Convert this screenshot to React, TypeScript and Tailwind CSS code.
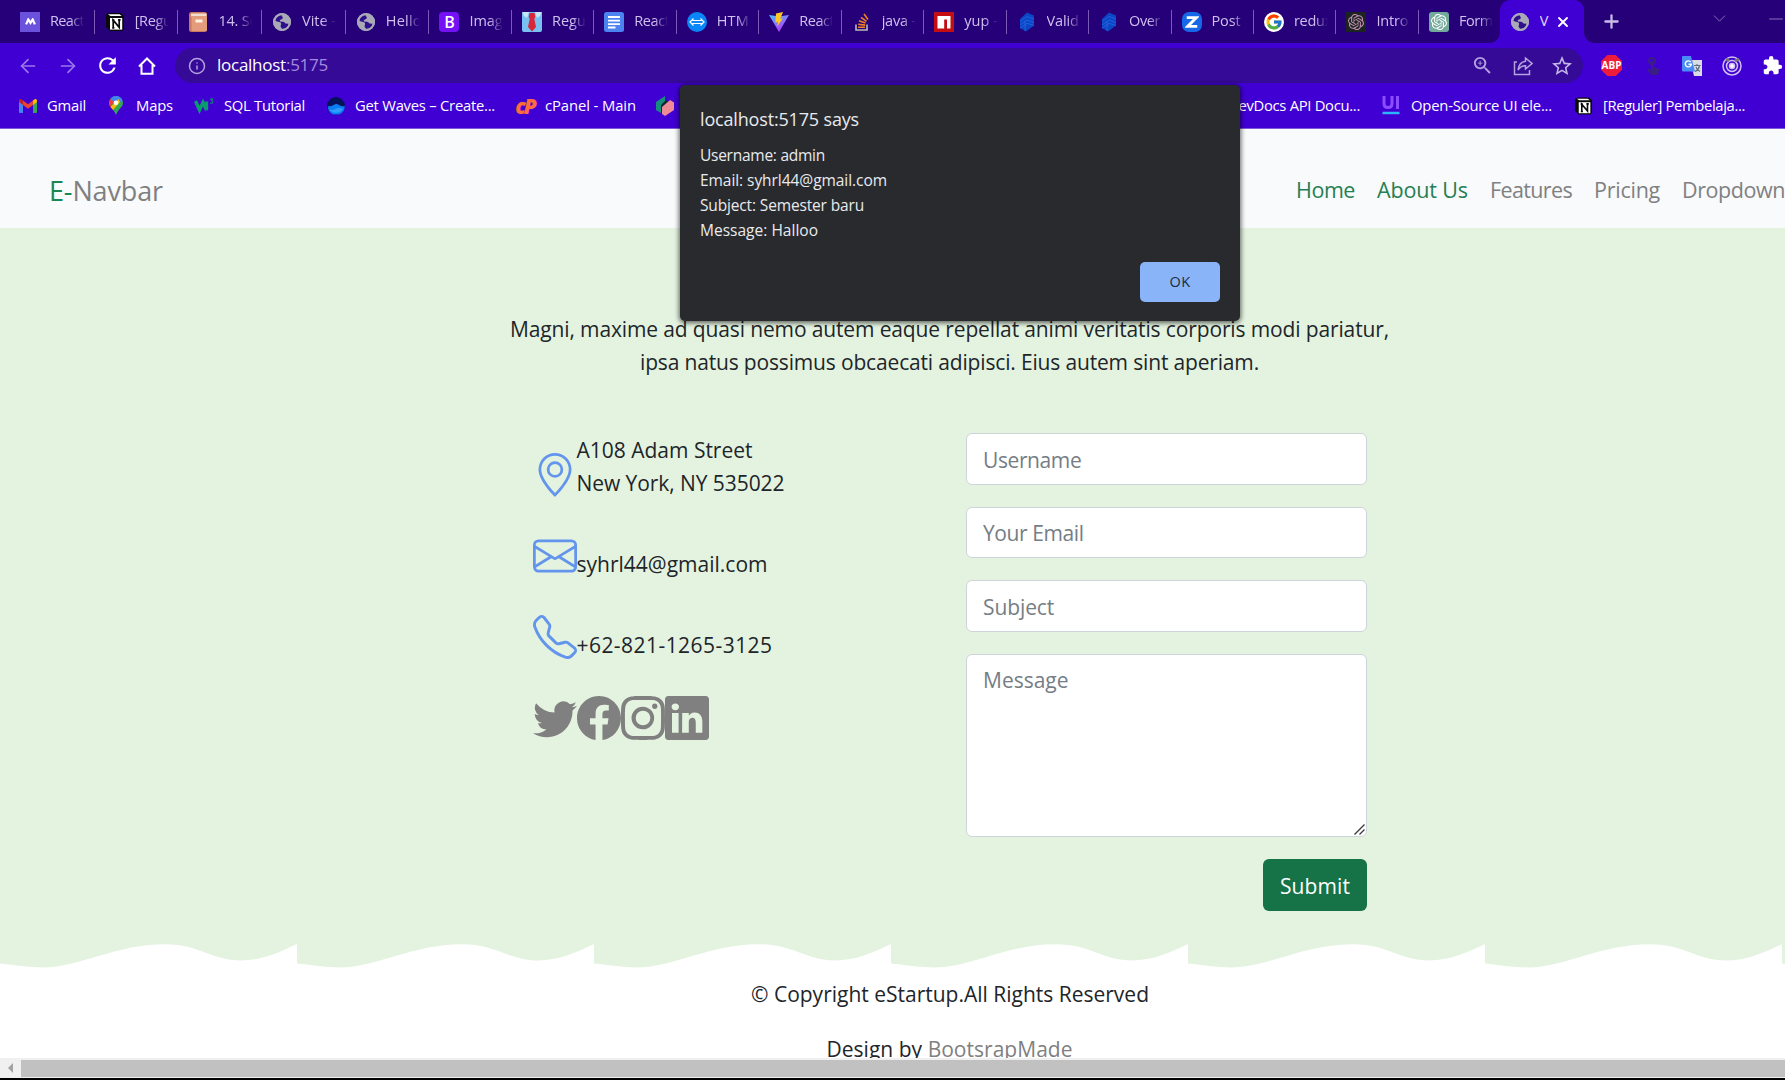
import { useLayoutEffect, useRef } from "react";
import type { ReactNode } from "react";
import {
  BsGeoAlt,
  BsEnvelope,
  BsTelephone,
  BsTwitter,
  BsFacebook,
  BsInstagram,
  BsLinkedin,
} from "react-icons/bs";
import { MdRefresh, MdExtension, MdStarBorder, MdOutlineZoomIn } from "react-icons/md";
import { FcGoogle } from "react-icons/fc";
import { SiOpenai } from "react-icons/si";
import { ArrowLeft, ArrowRight, Info, X, Plus, ChevronDown, Minus } from "lucide-react";

/** Inline text whose letter spacing is tuned so that it fills `w` pixels. */
function Fit({ w, children, className = "" }: { w: number; children: ReactNode; className?: string }) {
  const ref = useRef<HTMLSpanElement>(null);
  useLayoutEffect(() => {
    const el = ref.current;
    if (!el) return;
    el.style.letterSpacing = "0px";
    const n = (el.textContent || "").length;
    el.style.letterSpacing = `${(w - el.getBoundingClientRect().width) / n}px`;
  }, [w]);
  return (
    <span ref={ref} className={`inline-block whitespace-nowrap ${className}`}>
      {children}
    </span>
  );
}

/* ---------- small logos ---------- */

const Globe = () => (
  <svg viewBox="0 0 20 20" className="size-5">
    <circle cx="10" cy="10" r="9" fill="#a9a9b8" />
    <path
      d="M9.500 3.200q-4 .5-5.800 4L3.500 9l3.500 1q2.500.2 2 2.500l-.5 2 1.500 2.300q5.500.2 6.500-5l-3-.3q-1.200-2-3-1.700L8 9.500Q7 8 9 7.500q2-.3 1.800-2z"
      fill="#30108a"
    />
    <circle cx="10" cy="10" r="8.100" fill="none" stroke="#a9a9b8" strokeWidth="1.800" />
  </svg>
);

const Notion = () => (
  <svg viewBox="0 0 20 20" className="size-5">
    <path d="M1 2.500 4 1h12l3 3v13l-2 2H5l-4-4z" fill="#0a0a0a" />
    <path d="M3 2.300h11.500l2.200 1.600H5.400z" fill="#fff" />
    <path d="M5 6h12.200v11.600H5z" fill="#fff" />
    <path d="M8.200 15.800V8.200l6 7.200V7.800M7 8h2.400M13 7.800h2.600M7.200 15.800h2.200" fill="none" stroke="#0a0a0a" strokeWidth="1.700" />
  </svg>
);

const MLogo = () => (
  <div className="flex size-5 items-center justify-center bg-[#6a52dc]">
    <svg viewBox="0 0 12 8" className="w-[11px]">
      <path d="M1.200 7 3.600 1.600 6 5.400 8.400 1.600 10.800 7" fill="none" stroke="#fff" strokeWidth="2.400" />
    </svg>
  </div>
);

const Book = () => (
  <svg viewBox="0 0 20 20" className="size-5">
    <rect x="1" y="0" width="18" height="20" rx="2.500" fill="#c9795c" />
    <path d="M3 1.500h15.500v3H3z" fill="#f3dccd" />
    <rect x="3.500" y="4" width="15.500" height="15" rx="1" fill="#e39b7c" />
    <rect x="7.500" y="7.500" width="7" height="3" fill="#fff0e6" />
  </svg>
);

const BootstrapB = () => (
  <div className="flex size-5 items-center justify-center rounded-[4px] bg-[#7411f5] text-base leading-none font-semibold text-white">B</div>
);

const Tie = () => (
  <svg viewBox="0 0 20 20" className="size-5">
    <rect width="20" height="20" rx="2" fill="#79c0f2" />
    <path d="M0 0h7l-2 6-3-2zM20 0h-7l2 6 3-2z" fill="#c5e7fb" />
    <path d="M7.500 1h5l.8 4-1 2L14 15l-4 4.500L6 15l1.700-8-1-2z" fill="#d8263a" />
  </svg>
);

const Doc = () => (
  <svg viewBox="0 0 20 20" className="size-5">
    <rect width="20" height="20" rx="2.500" fill="#4b84f0" />
    <path d="M4 5h12M4 8.600h12M4 12.200h12M4 15.500h7.500" stroke="#fff" strokeWidth="1.800" />
  </svg>
);

const Arrows = () => (
  <svg viewBox="0 0 20 20" className="size-5">
    <circle cx="10" cy="10" r="10" fill="#0a86f8" />
    <path d="M5.500 8.500h9M5.500 11.500h9M6.500 6.500 3 10l3.500 3.500M13.500 6.500 17 10l-3.500 3.500" fill="none" stroke="#fff" strokeWidth="1.200" />
  </svg>
);

const Vite = () => (
  <svg viewBox="0 0 20 20" className="size-5">
    <defs>
      <linearGradient id="vite-body" x1="0" y1="0" x2="0.6" y2="1">
        <stop offset="0" stopColor="#48c4ff" />
        <stop offset="1" stopColor="#bd34fe" />
      </linearGradient>
    </defs>
    <path d="M0 3 10 20 20 3l-7 1H7z" fill="url(#vite-body)" />
    <path d="m14 0-7 1.500-.6 9 2.600-.6-.8 4.600L13.800 6.500l-2.600.4z" fill="#ffc824" />
  </svg>
);

const Stack = () => (
  <svg viewBox="0 0 20 20" className="size-5">
    <path d="M4 12.500V18h11v-5.500" fill="none" stroke="#bcbbbb" strokeWidth="1.600" />
    <path d="M6 15.300h7M6.200 12.300l7 .8M7 8.800l6.500 2.200M9 5.300l5.500 4M12 2l4 5.500" stroke="#f48024" strokeWidth="1.600" />
  </svg>
);

const Npm = () => (
  <svg viewBox="0 0 20 20" className="size-5">
    <rect width="20" height="20" fill="#c20d12" />
    <path d="M3.500 4h13v12.500H13V7.500h-2.800v9H3.500z" fill="#fff" />
  </svg>
);

const Layers = () => (
  <svg viewBox="0 0 20 20" className="size-5">
    <path d="M10 0.500 17 3.500v10L9 19.500 3 16V7z" fill="#0b47c4" />
    <path d="m3 9.500 7-5 7 2.500M3 13l7-5 7 2.500M3 16.300l7-5 7 2.200M8 19V9" fill="none" stroke="#2a6be6" strokeWidth=".7" />
  </svg>
);

const Zed = () => (
  <div className="flex size-5 items-center justify-center rounded-[7px] bg-[#1668e8]">
    <svg viewBox="0 0 12 12" className="size-[14px]">
      <path d="M1.500 2.200h8.300L2.200 9.800h8.300" fill="none" stroke="#fff" strokeWidth="2.400" />
    </svg>
  </div>
);

const Google = () => (
  <div className="flex size-5 items-center justify-center rounded-full bg-white">
    <FcGoogle className="size-[18px]" />
  </div>
);

const GptDark = () => (
  <div className="flex size-5 items-center justify-center bg-[#1c2420]">
    <SiOpenai className="size-4 text-[#c58fb4]" />
  </div>
);

const GptGreen = () => (
  <div className="flex size-5 items-center justify-center rounded-[3px] bg-[#74aa9c]">
    <SiOpenai className="size-4 text-white" />
  </div>
);

const Gmail = () => (
  <svg viewBox="0 0 18 14" className="w-[18px]">
    <path d="M0 1.500V13q0 1 1 1h3V5z" fill="#4285f4" />
    <path d="M18 1.500V13q0 1-1 1h-3V5z" fill="#34a853" />
    <path d="M14 1.500V6l4-3V1.500Q17.500-.5 15.500.3z" fill="#fbbc04" />
    <path d="M4 1.500V6l5 3.700L14 6V1.500L9 5.200z" fill="#ea4335" />
    <path d="M0 1.500V3l4 3V1.500L2.500.3Q.5-.5 0 1.500" fill="#c5221f" />
  </svg>
);

const Maps = () => (
  <svg viewBox="0 0 14 19" className="h-[19px]">
    <path d="M7 0a7 7 0 0 1 7 7c0 4-5 6-7 12C5 13 0 11 0 7a7 7 0 0 1 7-7" fill="#34a853" />
    <path d="M7 0a7 7 0 0 1 6.500 4.500L7 9 1.500 3A7 7 0 0 1 7 0" fill="#4285f4" />
    <path d="M1.500 3 5 6 1.500 11Q-1 7 1.500 3" fill="#ea4335" />
    <path d="M1.500 11 9.500 3 11 6 4 14z" fill="#fbbc04" />
    <circle cx="7" cy="6.800" r="2.400" fill="#fff" />
  </svg>
);

const W3 = () => (
  <svg viewBox="0 0 20 16" className="w-5">
    <path d="M1.500 3l4 9L9 4.500l3.500 7.500V3.500" fill="none" stroke="#0a9b6d" strokeWidth="3.400" />
    <path d="M16 1h3l-1.500 2q2 .2 1.500 1.600-1 1.400-3 .4" fill="none" stroke="#0a9b6d" strokeWidth="1" />
  </svg>
);

const Waves = () => (
  <svg viewBox="0 0 18 18" className="size-[18px]">
    <circle cx="9" cy="9" r="9" fill="#04125c" />
    <path d="M1 9q2.500 1 5.500-1T12 8t5.800 1A9 9 0 0 1 12 17.500H6A9 9 0 0 1 1 9" fill="#0a7cf5" />
    <path d="M2 12q3 2 6.500 0t7.500 0A8.500 8.500 0 0 1 2.500 13" fill="#2f9cff" />
  </svg>
);

const CPanel = () => (
  <span className="text-[21px] leading-5 font-extrabold tracking-[-2px] text-[#ff6c3c] italic">cP</span>
);

const Cube = () => (
  <svg viewBox="0 0 18 20" className="h-5">
    <path d="M0 6 9 0v6L5 10v7l-5-3z" fill="#158f7c" />
    <path d="M5 9 9 5l3-1v5l-6 8z" fill="#0a2a33" />
    <path d="m6 11 8-7 4 2.500V14l-9 6-3-2z" fill="#f08a96" />
  </svg>
);

const UiLogo = () => (
  <svg viewBox="0 0 18 19" className="h-[19px]">
    <path d="M2 0v7.500q0 4 4 4t4-4V0M15.500 0v13" fill="none" stroke="#8b4dff" strokeWidth="3" />
    <path d="M.5 17h17" stroke="#2cb4ff" strokeWidth="2.500" />
  </svg>
);

const Translate = () => (
  <svg viewBox="0 0 20 20" className="size-5">
    <path d="M8 4h12v16h-8z" fill="#d9dce2" />
    <path d="M12 9.500h6.500M15 8v1.500M17.500 10q-1 4-4.500 5.500M14 11q1 3 4 4.500" fill="none" stroke="#5f6a80" strokeWidth="1.100" />
    <path d="M1 0h8l4 15.500H1q-1 0-1-1V1q0-1 1-1" fill="#4a8cf7" />
    <path d="M8.800 6.200A3 3 0 1 0 9.300 8.300H6.500" fill="none" stroke="#fff" strokeWidth="1.400" />
  </svg>
);

const Share = () => (
  <svg viewBox="0 0 20 20" className="size-5" fill="none" stroke="#b3a2df" strokeWidth="1.500">
    <path d="M4 6H1.500v12.500h15V14" />
    <path d="M12.500 2 19 7.500 12.500 13v-3.200Q8 9.500 5 14q1-8 7.500-8.800z" />
  </svg>
);

/* ---------- browser chrome ---------- */

const tabs: { icon: ReactNode; label: string; w: number }[] = [
  { icon: <MLogo />, label: "React", w: 34 },
  { icon: <Notion />, label: "[Regu", w: 37 },
  { icon: <Book />, label: "14. Se", w: 39 },
  { icon: <Globe />, label: "Vite -", w: 34 },
  { icon: <Globe />, label: "Hello", w: 36 },
  { icon: <BootstrapB />, label: "Imag", w: 33 },
  { icon: <Tie />, label: "Regu", w: 34 },
  { icon: <Doc />, label: "React", w: 35 },
  { icon: <Arrows />, label: "HTM", w: 32 },
  { icon: <Vite />, label: "React", w: 35 },
  { icon: <Stack />, label: "java -", w: 34 },
  { icon: <Npm />, label: "yup -", w: 34 },
  { icon: <Layers />, label: "Valid", w: 32 },
  { icon: <Layers />, label: "Over", w: 31 },
  { icon: <Zed />, label: "Post", w: 29 },
  { icon: <Google />, label: "redux", w: 38 },
  { icon: <GptDark />, label: "Intro", w: 32 },
  { icon: <GptGreen />, label: "Form", w: 34 },
];

function TabStrip() {
  return (
    <div className="flex h-[43px] shrink-0 bg-[#260078] pl-[11px]">
      {tabs.map((t, i) => (
        <div
          key={i}
          className={`flex shrink-0 items-center ${i < 5 ? "w-[83.700px]" : "w-[82.460px]"} ${i === 0 ? "pl-[9px]" : "pl-2.5"}`}
        >
          <div className="flex size-5 items-center justify-center">{t.icon}</div>
          <div className="-mt-0.5 ml-2.5 w-[34px] overflow-hidden mask-r-from-60% text-[14.500px] leading-6 text-[#cfc0ee]">
            <Fit w={t.w}>{t.label}</Fit>
          </div>
          {i < tabs.length - 1 && <div className="ml-auto h-6 w-px bg-[#7a5bb8]" />}
        </div>
      ))}
      <div className="relative -ml-[1.500px] flex h-[43px] w-[84px] shrink-0 items-center rounded-t-[10px] bg-[#4000d4] pl-2.5">
        <div className="absolute bottom-0 -left-2.5 size-2.5 bg-[radial-gradient(circle_at_0_0,#260078_9.5px,#4000d4_10px)]" />
        <div className="absolute -right-2.5 bottom-0 size-2.5 bg-[radial-gradient(circle_at_100%_0,#260078_9.5px,#4000d4_10px)]" />
        <Globe />
        <span className="-mt-0.5 ml-2.5 w-[9px] overflow-hidden text-[14.500px] text-[#e4dcff]">V</span>
        <X className="ml-[6px] size-[16px] text-white" strokeWidth={2.800} />
      </div>
      <Plus className="mt-[11px] ml-[17px] size-[21px] shrink-0 text-[#c9bce8]" strokeWidth={2.600} />
      <ChevronDown className="mt-2 ml-[87px] size-[21px] shrink-0 text-[#8a72be]" strokeWidth={1.100} />
      <Minus className="mt-2 ml-[35px] size-[22px] shrink-0 text-[#8a72be]" strokeWidth={1.100} />
    </div>
  );
}

function Toolbar() {
  return (
    <div className="flex h-10 shrink-0 items-center pt-[5px] text-white">
      <ArrowLeft className="ml-[17px] size-[22px] text-[#9a78ea]" strokeWidth={1.900} />
      <ArrowRight className="ml-[18px] size-[22px] text-[#9a78ea]" strokeWidth={1.900} />
      <MdRefresh className="ml-4 size-[25px]" />
      <svg viewBox="0 0 18 18" className="ml-[18px] size-[18px]" fill="none" stroke="currentColor" strokeWidth="2">
        <path d="M1 9.500 9 1.500l8 8M3.500 8v8.700h11V8" />
      </svg>
      <div className="ml-[19px] flex h-[35px] w-[1408px] shrink-0 items-center rounded-full bg-[#350a96] pl-[13px]">
        <Info className="size-[18px] text-[#b3a2df]" strokeWidth={2} />
        <div className="-mt-px ml-[11px] text-[17px]">
          <Fit w={111}>
            localhost<span className="text-[#a48ade]">:5175</span>
          </Fit>
        </div>
        <MdOutlineZoomIn className="ml-auto size-[23px] text-[#b3a2df]" />
        <div className="ml-[19px]">
          <Share />
        </div>
        <MdStarBorder className="mr-[9px] ml-[17px] size-[24px] text-[#c4b6e8]" />
      </div>
      <div className="ml-[18px] flex size-[21px] shrink-0 items-center justify-center bg-[#ee1c3b] text-[10px] font-bold text-white [clip-path:polygon(30%_0,70%_0,100%_30%,100%_70%,70%_100%,30%_100%,0_70%,0_30%)]">
        ABP
      </div>
      <svg viewBox="0 0 14 18" className="ml-[24px] h-[18px] shrink-0" fill="#3b1d86">
        <circle cx="6" cy="4" r="3" fill="none" stroke="#3b1d86" strokeWidth="2" />
        <path d="M5 4h2.500v6l5 1.500q1.500 1 1 3L12 18H5L1 12.500l1.500-1L5 13z" />
      </svg>
      <div className="ml-[22px] shrink-0">
        <Translate />
      </div>
      <svg viewBox="0 0 20 20" className="ml-5 size-5 shrink-0" fill="none" stroke="#d0c0f4" strokeWidth="1.500">
        <circle cx="10" cy="10" r="9" />
        <circle cx="10" cy="10" r="5.500" />
        <circle cx="10" cy="10" r="2.500" fill="#fff" />
        <path d="M4 3 7 5M13 5l4-2" stroke="#777" strokeWidth="3" />
      </svg>
      <MdExtension className="ml-5 size-[21px] shrink-0" />
    </div>
  );
}

function Bookmark({ icon, label, w, iconW, gap, lead }: { icon: ReactNode; label: string; w: number; iconW: number; gap: number; lead: number }) {
  return (
    <div className="flex shrink-0 items-center" style={{ marginLeft: lead }}>
      <div className="flex shrink-0 items-center justify-center" style={{ width: iconW, marginRight: gap }}>
        {icon}
      </div>
      <Fit w={w}>{label}</Fit>
    </div>
  );
}

function Bookmarks() {
  return (
    <div className="flex h-[46px] shrink-0 items-center border-b border-[#7d5bd6] text-[14.800px] text-white">
      <Bookmark icon={<Gmail />} label="Gmail" lead={19} iconW={18} gap={10} w={39} />
      <Bookmark icon={<Maps />} label="Maps" lead={22} iconW={16} gap={12} w={37} />
      <Bookmark icon={<W3 />} label="SQL Tutorial" lead={21} iconW={20} gap={10} w={81} />
      <Bookmark icon={<Waves />} label="Get Waves – Create..." lead={22} iconW={18} gap={10} w={140} />
      <Bookmark icon={<CPanel />} label="cPanel - Main" lead={20} iconW={20} gap={10} w={91} />
      <div className="ml-5">
        <Cube />
      </div>
      <div className="ml-[554px] shrink-0">
        <Fit w={132}>DevDocs API Docu...</Fit>
      </div>
      <Bookmark icon={<UiLogo />} label="Open-Source UI ele..." lead={22} iconW={18} gap={11} w={141} />
      <Bookmark icon={<Notion />} label="[Reguler] Pembelaja..." lead={22} iconW={19} gap={10} w={142} />
    </div>
  );
}

/* ---------- alert ---------- */

function Alert() {
  return (
    <div className="absolute top-[85px] left-[680px] flex h-[236px] w-[560px] flex-col rounded-[5px] bg-[#292a2d] px-5 text-[#e8eaed] shadow-[0_1px_5px_1px_rgba(0,0,0,0.6)]">
      <div className="mt-[21px] text-lg leading-[27px]">
        <Fit w={159}>localhost:5175 says</Fit>
      </div>
      <div className="mt-[10px] flex flex-col items-start text-[15.500px] leading-[25px]">
        <Fit w={125}>Username: admin</Fit>
        <Fit w={187}>Email: syhrl44@gmail.com</Fit>
        <Fit w={164}>Subject: Semester baru</Fit>
        <Fit w={118}>Message: Halloo</Fit>
      </div>
      <button className="mt-[19px] h-10 w-20 self-end rounded-[5px] bg-[#8ab4f8] text-[14.500px] font-medium text-[#202b3d]">
        <Fit w={21}>OK</Fit>
      </button>
    </div>
  );
}

/* ---------- page ---------- */

function Navbar() {
  return (
    <nav className="flex h-[99px] shrink-0 items-start bg-[#f8fafc] pl-[49px] text-[#808080]">
      <div className="mt-[42px] w-[1248px] text-[27px] leading-[40px]">
        <Fit w={114}>
          <span className="text-[#198754]">E-</span>Navbar
        </Fit>
      </div>
      <div className="mt-[44px] flex shrink-0 gap-[22px] text-[21.500px] leading-[34px]">
        <Fit w={59} className="text-[#257f53]">Home</Fit>
        <Fit w={91} className="text-[#257f53]">About Us</Fit>
        <Fit w={82}>Features</Fit>
        <Fit w={66}>Pricing</Fit>
        <Fit w={103}>Dropdown</Fit>
      </div>
    </nav>
  );
}

const field = "w-full rounded-md border border-[#ced4da] bg-white px-4 placeholder:text-[#757d85]";

function Contact() {
  return (
    <section className="flex h-[716px] shrink-0 flex-col bg-[#e4f3e0] text-[#212529]">
      <div className="mt-[85px] ml-[510px] flex w-[879px] flex-col items-center leading-[33px]">
        <Fit w={879}>Magni, maxime ad quasi nemo autem eaque repellat animi veritatis corporis modi pariatur,</Fit>
        <Fit w={619}>ipsa natus possimus obcaecati adipisci. Eius autem sint aperiam.</Fit>
      </div>
      <div className="mt-[54px] ml-[532.500px] flex">
        <div className="w-[433.500px] leading-[33px]">
          <div className="flex">
            <BsGeoAlt className="mt-[20px] size-11 text-[#6495ed]" />
            <div className="mt-[1px] flex flex-col items-start">
              <Fit w={176}>A108 Adam Street</Fit>
              <Fit w={208}>New York, NY 535022</Fit>
            </div>
          </div>
          <div className="mt-[32px] flex h-[48px] items-end">
            <BsEnvelope className="mb-[2px] size-11 text-[#6495ed]" />
            <div className="-mb-px">
              <Fit w={191}>syhrl44@gmail.com</Fit>
            </div>
          </div>
          <div className="mt-[33px] flex h-[48px] items-end">
            <BsTelephone className="mb-[2px] size-11 text-[#6495ed]" />
            <div className="-mb-[1px]">
              <Fit w={196}>+62-821-1265-3125</Fit>
            </div>
          </div>
          <div className="mt-[35px] flex text-[#808080]">
            <BsTwitter className="size-11" />
            <BsFacebook className="size-11" />
            <BsInstagram className="size-11" />
            <BsLinkedin className="size-11" />
          </div>
        </div>
        <form className="flex w-[401px] flex-col">
          <input className={`${field} h-[52px] pt-0.5 tracking-[-0.4px]`} placeholder="Username" />
          <input className={`${field} mt-[22px] h-[51px] tracking-[-0.400px]`} placeholder="Your Email" />
          <input className={`${field} mt-[22px] h-[52px] pt-0.5 tracking-[-0.100px]`} placeholder="Subject" />
          <div className="relative mt-[22px] h-[183px]">
            <textarea className={`${field} block h-full resize-none py-[9px] leading-[33px]`} placeholder="Message" />
            <svg viewBox="0 0 11 11" className="absolute right-[2px] bottom-[2px] size-[11px]">
              <path d="M.5 10.500l10-10M5.500 10.500l5-5" stroke="#3c3c3c" strokeWidth="1.400" />
            </svg>
          </div>
          <button type="button" className="mt-[22px] h-[52px] w-[104px] self-end rounded-md bg-[#157347] pt-[3px] text-white">
            <Fit w={70}>Submit</Fit>
          </button>
        </form>
      </div>
    </section>
  );
}

function WaveRow() {
  return (
    <div className="flex h-6 shrink-0 overflow-hidden">
      {Array.from({ length: 7 }, (_, i) => (
        <svg key={i} viewBox="0 0 297 24" className="h-6 w-[297px] shrink-0">
          <path
            d="M0 0V19.500C20 21.800 30 23.400 43 23.400C80 23.400 115 0.200 165 0.200C200 0.200 212 16.500 241 16.500C262 16.500 280 8 297 0Z"
            fill="#e4f3e0"
          />
        </svg>
      ))}
    </div>
  );
}

function Footer() {
  return (
    <footer className="flex h-[90px] shrink-0 flex-col overflow-hidden bg-white text-[#212529]">
      <div className="mt-[10px] ml-[751px] leading-[33px]">
        <Fit w={398}>© Copyright eStartup.All Rights Reserved</Fit>
      </div>
      <div className="mt-[22px] ml-[826.500px] leading-[33px]">
        <Fit w={246}>
          Design by <span className="text-[#808080]">BootsrapMade</span>
        </Fit>
      </div>
    </footer>
  );
}

export default function App() {
  return (
    <div className="relative flex h-[1080px] w-[1785px] flex-col overflow-hidden bg-white font-['Open_Sans',sans-serif]">
      <header className="flex h-[129px] shrink-0 flex-col bg-[#4000d4]">
        <TabStrip />
        <Toolbar />
        <Bookmarks />
      </header>
      <div className="flex shrink-0 flex-col text-[21px]">
        <Navbar />
        <Contact />
        <WaveRow />
        <Footer />
      </div>
      <div className="flex h-5 shrink-0 items-center bg-[#f0f0f0]">
        <svg viewBox="0 0 5 10" className="ml-2 h-2.5 w-[5px]">
          <path d="M5 0v10L0 5z" fill="#a3a3a3" />
        </svg>
        <div className="ml-2 h-[17px] grow bg-[#c1c1c1]" />
      </div>
      <div className="h-0.5 shrink-0 bg-black" />
      <Alert />
    </div>
  );
}
